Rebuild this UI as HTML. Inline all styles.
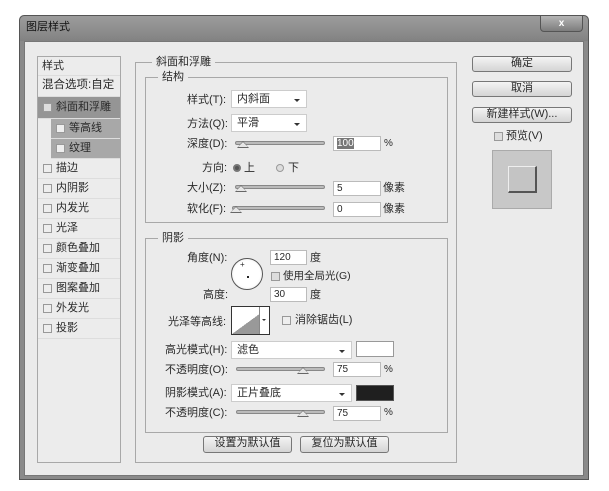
<!DOCTYPE html>
<html><head><meta charset="utf-8"><style>
*{box-sizing:border-box}
body{margin:0;width:609px;height:491px;background:#fff;position:relative;overflow:hidden;font-family:"Liberation Sans","Noto Sans CJK SC",sans-serif;font-size:11px;color:#2a2a2a}
.a{position:absolute}
.t{position:absolute;white-space:nowrap;line-height:14px}
.box{position:absolute;border:1px solid #a8a8a8}
.in{position:absolute;background:#fff;border:1px solid #bbb;height:15px;font-size:10px;padding-left:3px;line-height:13px}
.dd{position:absolute;background:#fff;border:1px solid #ccc;height:18px;padding-left:5px;line-height:16px;font-size:11px}
.dd:after{content:"";position:absolute;right:6px;top:8px;border-left:3px solid transparent;border-right:3px solid transparent;border-top:3px solid #333}
.tr{position:absolute;height:4px;background:#bbb;border:1px solid #888;border-radius:2px}
.th{position:absolute;width:0;height:0;border-left:6px solid transparent;border-right:6px solid transparent;border-bottom:7px solid #666}
.th:after{content:"";position:absolute;left:-5px;top:1px;border-left:5px solid transparent;border-right:5px solid transparent;border-bottom:5px solid #e6e6e6}
.cb{position:absolute;width:9px;height:9px;border:1px solid #999;background:#eee}
.btn{position:absolute;border:1px solid #777;border-radius:3px;background:linear-gradient(#f4f4f4,#d4d4d4);text-align:center;font-size:11px;line-height:13px}
.row{position:absolute;left:0;width:82px;height:20px;border-bottom:1px solid #ddd;line-height:19px;padding-left:18px}
.row .cb{left:5px;top:5px}
</style></head><body>
<div class="a" style="left:19px;top:15px;width:570px;height:465px;background:#8a8a8a;border-radius:5px 5px 0 0;border:1px solid #555"></div>
<div class="a" style="left:20px;top:16px;width:568px;height:25px;background:linear-gradient(#9c9c9c,#828282);border-radius:5px 5px 0 0"></div>
<div class="t" style="left:26px;top:20px;font-size:11px;color:#111">图层样式</div>
<div class="a" style="left:540px;top:15px;width:43px;height:17px;border:1px solid #555;border-radius:0 0 4px 4px;background:linear-gradient(#b5b5b5,#7d7d7d);color:#fff;text-align:center;font-weight:bold;font-size:10px;line-height:15px">x</div>
<div class="a" style="left:24px;top:41px;width:560px;height:435px;background:#ebebeb;border:1px solid #777"></div>
<div class="box" style="left:37px;top:56px;width:84px;height:407px;background:#ececec">
 <div class="row" style="top:0;padding-left:4px;height:19px">样式</div>
 <div class="row" style="top:19px;padding-left:4px;height:21px;font-size:11.5px">混合选项:自定</div>
 <div class="row" style="top:40px;height:22px;background:#959595;line-height:21px"><span class="cb" style="top:6px;background:#ddd"></span>斜面和浮雕</div>
 <div class="row" style="top:62px;left:13px;width:69px;background:#a8a8a8;padding-left:18px"><span class="cb"></span>等高线</div>
 <div class="row" style="top:82px;left:13px;width:69px;background:#a8a8a8;padding-left:18px"><span class="cb"></span>纹理</div>
 <div class="row" style="top:102px"><span class="cb"></span>描边</div>
 <div class="row" style="top:122px"><span class="cb"></span>内阴影</div>
 <div class="row" style="top:142px"><span class="cb"></span>内发光</div>
 <div class="row" style="top:162px"><span class="cb"></span>光泽</div>
 <div class="row" style="top:182px"><span class="cb"></span>颜色叠加</div>
 <div class="row" style="top:202px"><span class="cb"></span>渐变叠加</div>
 <div class="row" style="top:222px"><span class="cb"></span>图案叠加</div>
 <div class="row" style="top:242px"><span class="cb"></span>外发光</div>
 <div class="row" style="top:262px"><span class="cb"></span>投影</div>
</div>
<div class="box" style="left:135px;top:62px;width:322px;height:401px"></div>
<div class="t" style="left:152px;top:55px;background:#ebebeb;padding:0 4px">斜面和浮雕</div>
<div class="box" style="left:145px;top:77px;width:303px;height:146px"></div>
<div class="t" style="left:158px;top:70px;background:#ebebeb;padding:0 4px">结构</div>
<div class="box" style="left:145px;top:238px;width:303px;height:195px"></div>
<div class="t" style="left:158px;top:231px;background:#ebebeb;padding:0 4px">阴影</div>

<div class="t" style="left:187px;top:93px">样式(T):</div>
<div class="dd" style="left:231px;top:90px;width:76px">内斜面</div>
<div class="t" style="left:187px;top:117px">方法(Q):</div>
<div class="dd" style="left:231px;top:114px;width:76px">平滑</div>
<div class="t" style="left:187px;top:137px">深度(D):</div>
<div class="tr" style="left:235px;top:141px;width:90px"></div><div class="th" style="left:237px;top:141px"></div>
<div class="in" style="left:333px;top:136px;width:48px"><span style="background:#777;color:#fff">100</span></div>
<div class="t" style="left:384px;top:137px;font-size:10px">%</div>
<div class="t" style="left:202px;top:161px">方向:</div>
<div class="a" style="left:233px;top:164px;width:8px;height:8px;border-radius:50%;border:2px solid #777;background:#555"></div>
<div class="t" style="left:244px;top:161px">上</div>
<div class="a" style="left:276px;top:164px;width:8px;height:8px;border-radius:50%;border:1px solid #999;background:#ddd"></div>
<div class="t" style="left:288px;top:161px">下</div>
<div class="t" style="left:187px;top:181px">大小(Z):</div>
<div class="tr" style="left:235px;top:185px;width:90px"></div><div class="th" style="left:235px;top:185px"></div>
<div class="in" style="left:333px;top:181px;width:48px">5</div>
<div class="t" style="left:383px;top:181px">像素</div>
<div class="t" style="left:187px;top:202px">软化(F):</div>
<div class="tr" style="left:232px;top:206px;width:93px"></div><div class="th" style="left:230px;top:206px"></div>
<div class="in" style="left:333px;top:202px;width:48px">0</div>
<div class="t" style="left:383px;top:202px">像素</div>

<div class="t" style="left:187px;top:251px">角度(N):</div>
<div class="a" style="left:231px;top:258px;width:32px;height:32px;border-radius:50%;border:1px solid #555;background:radial-gradient(#fff 60%,#ddd)"></div>
<div class="t" style="left:240px;top:261px;font-size:8px;line-height:8px">+</div>
<div class="a" style="left:247px;top:276px;width:2px;height:2px;background:#222"></div>
<div class="in" style="left:270px;top:250px;width:37px">120</div>
<div class="t" style="left:310px;top:251px">度</div>
<div class="cb" style="left:271px;top:272px;background:#ddd"></div>
<div class="t" style="left:283px;top:269px;font-size:10.5px">使用全局光(G)</div>
<div class="t" style="left:203px;top:288px">高度:</div>
<div class="in" style="left:270px;top:287px;width:37px">30</div>
<div class="t" style="left:310px;top:288px">度</div>
<div class="t" style="left:168px;top:315px">光泽等高线:</div>
<div class="a" style="left:231px;top:306px;width:39px;height:29px;border:1px solid #333;background:linear-gradient(to top left,#999 50%,#fff 50%)"></div>
<div class="a" style="left:259px;top:307px;width:10px;height:27px;background:#fff;border-left:1px solid #888"></div>
<div class="a" style="left:262px;top:319px;border-left:2px solid transparent;border-right:2px solid transparent;border-top:2px solid #333"></div>
<div class="cb" style="left:282px;top:316px"></div>
<div class="t" style="left:295px;top:313px">消除锯齿(L)</div>
<div class="t" style="left:165px;top:343px">高光模式(H):</div>
<div class="dd" style="left:231px;top:341px;width:121px">滤色</div>
<div class="a" style="left:356px;top:341px;width:38px;height:16px;background:#fff;border:1px solid #999"></div>
<div class="t" style="left:165px;top:363px">不透明度(O):</div>
<div class="tr" style="left:236px;top:367px;width:89px"></div><div class="th" style="left:297px;top:367px"></div>
<div class="in" style="left:333px;top:362px;width:48px">75</div>
<div class="t" style="left:384px;top:363px;font-size:10px">%</div>
<div class="t" style="left:165px;top:386px">阴影模式(A):</div>
<div class="dd" style="left:231px;top:384px;width:121px">正片叠底</div>
<div class="a" style="left:356px;top:385px;width:38px;height:16px;background:#1f1f1f;border:1px solid #555"></div>
<div class="t" style="left:165px;top:406px">不透明度(C):</div>
<div class="tr" style="left:236px;top:410px;width:89px"></div><div class="th" style="left:297px;top:410px"></div>
<div class="in" style="left:333px;top:406px;width:48px">75</div>
<div class="t" style="left:384px;top:406px;font-size:10px">%</div>
<div class="btn" style="left:203px;top:436px;width:89px;height:17px">设置为默认值</div>
<div class="btn" style="left:300px;top:436px;width:89px;height:17px">复位为默认值</div>

<div class="btn" style="left:472px;top:56px;width:100px;height:16px">确定</div>
<div class="btn" style="left:472px;top:81px;width:100px;height:16px">取消</div>
<div class="btn" style="left:472px;top:107px;width:100px;height:16px">新建样式(W)...</div>
<div class="cb" style="left:494px;top:132px;background:#ddd"></div>
<div class="t" style="left:506px;top:129px">预览(V)</div>
<div class="a" style="left:492px;top:150px;width:60px;height:59px;background:#c8c8c8;border:1px solid #aaa"></div>
<div class="a" style="left:508px;top:166px;width:29px;height:27px;background:#c4c4c4;border:1px solid #eee;border-right:2px solid #555;border-bottom:2px solid #555"></div>
</body></html>
